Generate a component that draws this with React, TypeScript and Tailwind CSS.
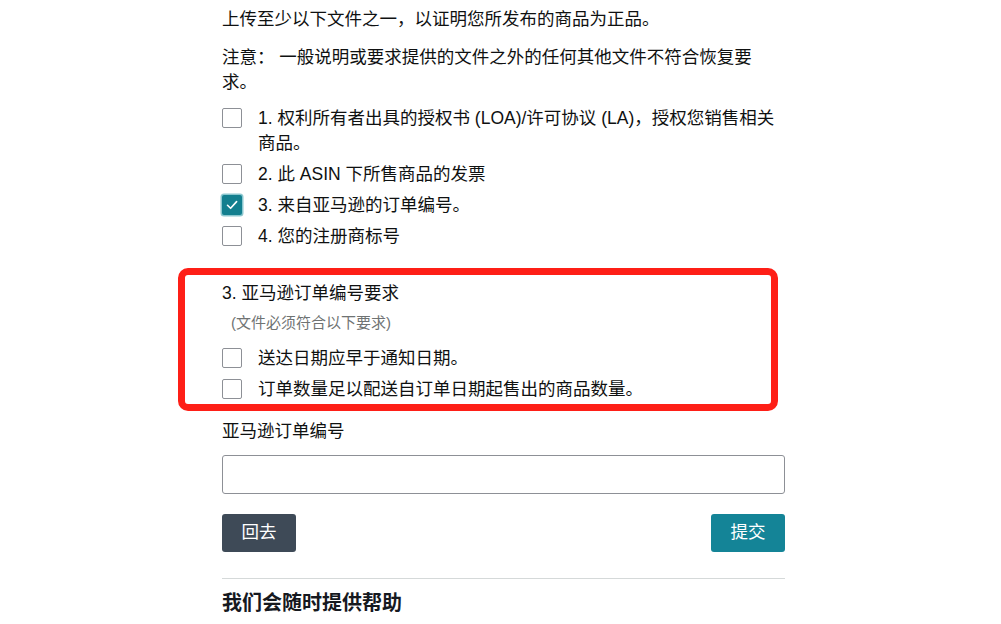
import React from "react";

const FONT = {
  fontFamily:
    '"Liberation Sans", Arial, "Noto Sans CJK SC", "Microsoft YaHei", sans-serif',
};

function Box({ checked = false }: { checked?: boolean }) {
  if (checked) {
    return (
      <span className="flex h-[20px] w-[20px] shrink-0 items-center justify-center rounded-[2px] bg-[#137f8f] ring-[1.5px] ring-[#8cc7cf]">
        <svg width="14" height="14" viewBox="0 0 14 14" fill="none">
          <path
            d="M2.5 7.3 L5.6 10.3 L11.6 3.6"
            stroke="#ffffff"
            strokeWidth="1.6"
            strokeLinecap="round"
            strokeLinejoin="round"
          />
        </svg>
      </span>
    );
  }
  return (
    <span className="block h-[20px] w-[20px] shrink-0 rounded-[2px] border border-[#8d9096] bg-white" />
  );
}

function Row({
  checked,
  children,
}: {
  checked?: boolean;
  children: React.ReactNode;
}) {
  return (
    <div className="flex items-start gap-[16px]">
      <div className="flex h-[25px] items-center">
        <Box checked={checked} />
      </div>
      <div className="flex-1">{children}</div>
    </div>
  );
}

export default function App() {
  return (
    <div
      className="min-h-[624px] w-full bg-white text-[17.5px] leading-[25px] text-[#0f1111]"
      style={FONT}
    >
      <div className="ml-[222px] flex w-[563px] flex-col pt-[6.5px]">
        <p>上传至少以下文件之一，以证明您所发布的商品为正品。</p>
        <p className="mt-[13px]">
          注意： 一般说明或要求提供的文件之外的任何其他文件不符合恢复要求。
        </p>

        <div className="mt-[11px] flex flex-col gap-[6px]">
          <Row>
            1. 权利所有者出具的授权书 (LOA)/许可协议 (LA)，授权您销售相关商品。
          </Row>
          <Row>2. 此 ASIN 下所售商品的发票</Row>
          <Row checked>3. 来自亚马逊的订单编号。</Row>
          <Row>4. 您的注册商标号</Row>
        </div>

        <div className="relative mt-[32px]">
          <div className="pointer-events-none absolute -left-[44px] right-[7px] -top-[12.5px] -bottom-[9.5px] rounded-[10px] border-[7px] border-[#fe1f17]" />
          <p>3. 亚马逊订单编号要求</p>
          <p className="mt-[6px] pl-[9px] text-[15px] leading-[22px] text-[#6f7373]">
            (文件必须符合以下要求)
          </p>
          <div className="mt-[12px] flex flex-col gap-[6px]">
            <Row>送达日期应早于通知日期。</Row>
            <Row>订单数量足以配送自订单日期起售出的商品数量。</Row>
          </div>
        </div>

        <label className="mt-[17.5px] block">亚马逊订单编号</label>
        <input
          type="text"
          className="mt-[10.5px] h-[39px] w-full rounded-[3px] border border-[#8d9096] bg-white px-3 outline-none"
          style={FONT}
        />

        <div className="mt-[20px] flex items-center justify-between">
          <button
            className="flex h-[38px] w-[74px] items-center justify-center rounded-[3px] bg-[#3e4a57] text-white"
            style={FONT}
          >
            回去
          </button>
          <button
            className="flex h-[38px] w-[74px] items-center justify-center rounded-[3px] bg-[#148497] text-white"
            style={FONT}
          >
            提交
          </button>
        </div>

        <div className="mt-[26px] h-px w-full bg-[#d5d9d9]" />

        <h2 className="mt-[10.5px] text-[20px] font-bold leading-[28px] text-[#16191f]">
          我们会随时提供帮助
        </h2>
      </div>
    </div>
  );
}
